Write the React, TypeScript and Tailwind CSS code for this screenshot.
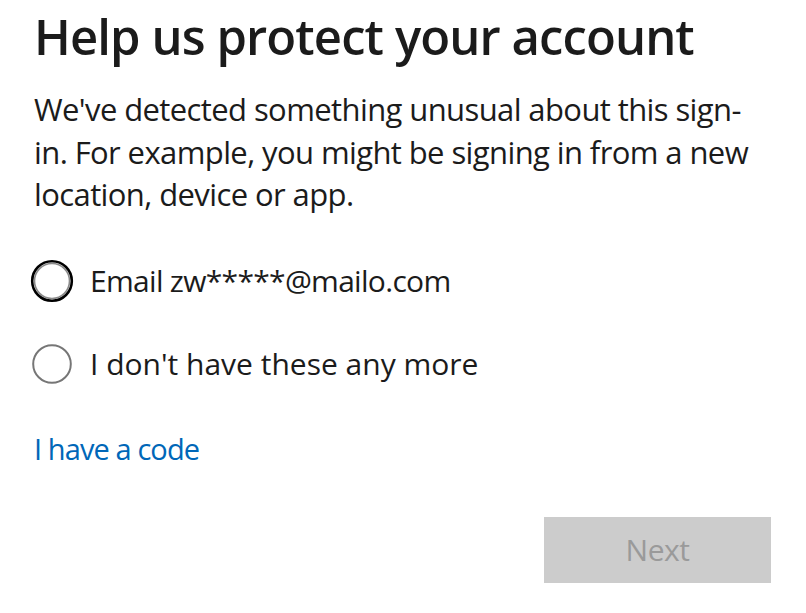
import React from "react";

function Radio({ focused }: { focused?: boolean }) {
  return (
    <svg width="44" height="44" viewBox="0 0 44 44" className="shrink-0">
      {focused ? (
        <>
          <circle cx="22" cy="22" r="19.8" fill="white" stroke="#000" strokeWidth="2.6" />
          <circle cx="22" cy="22" r="17.5" fill="none" stroke="#8a8a8a" strokeWidth="1.6" />
        </>
      ) : (
        <circle cx="22" cy="22" r="18.8" fill="white" stroke="#767676" strokeWidth="2" />
      )}
    </svg>
  );
}

export default function App() {
  const font = { fontFamily: '"Open Sans", "Noto Sans", sans-serif' };
  return (
    <div className="w-[806px] h-[613px] bg-white overflow-hidden text-[#1b1b1b]" style={font}>
      <div className="pl-[34px] pr-[30px] pt-[3px] flex flex-col">
        <h1 className="text-[49px] leading-[66px] font-semibold tracking-[-0.9px] whitespace-nowrap text-[#1b1b1b]">
          Help us protect your account
        </h1>
        <div className="mt-[19px] text-[31px] leading-[42.5px] tracking-[-0.6px] text-[#1b1b1b]">
          <div className="whitespace-nowrap">We've detected something unusual about this sign-</div>
          <div className="whitespace-nowrap">in. For example, you might be signing in from a new</div>
          <div className="whitespace-nowrap">location, device or app.</div>
        </div>
        <div className="mt-[43px] flex flex-col gap-[39px] -ml-[4px]">
          <label className="flex items-center gap-[16px] h-[44px]">
            <Radio focused />
            <span className="text-[30px] tracking-[-0.7px] leading-[42px]">Email zw*****@mailo.com</span>
          </label>
          <label className="flex items-center gap-[16px] h-[44px]">
            <Radio />
            <span className="text-[30px] tracking-[0px] leading-[42px]">I don't have these any more</span>
          </label>
        </div>
        <a className="mt-[42px] text-[29px] leading-[42px] tracking-[-0.9px] text-[#0067b8] self-start">
          I have a code
        </a>
        <div className="mt-[47px] flex justify-end pr-[5px]">
          <button className="w-[227px] h-[66px] bg-[#cccccc] text-[#9a9a9a] text-[30px] tracking-[-0.5px]">
            Next
          </button>
        </div>
      </div>
    </div>
  );
}
